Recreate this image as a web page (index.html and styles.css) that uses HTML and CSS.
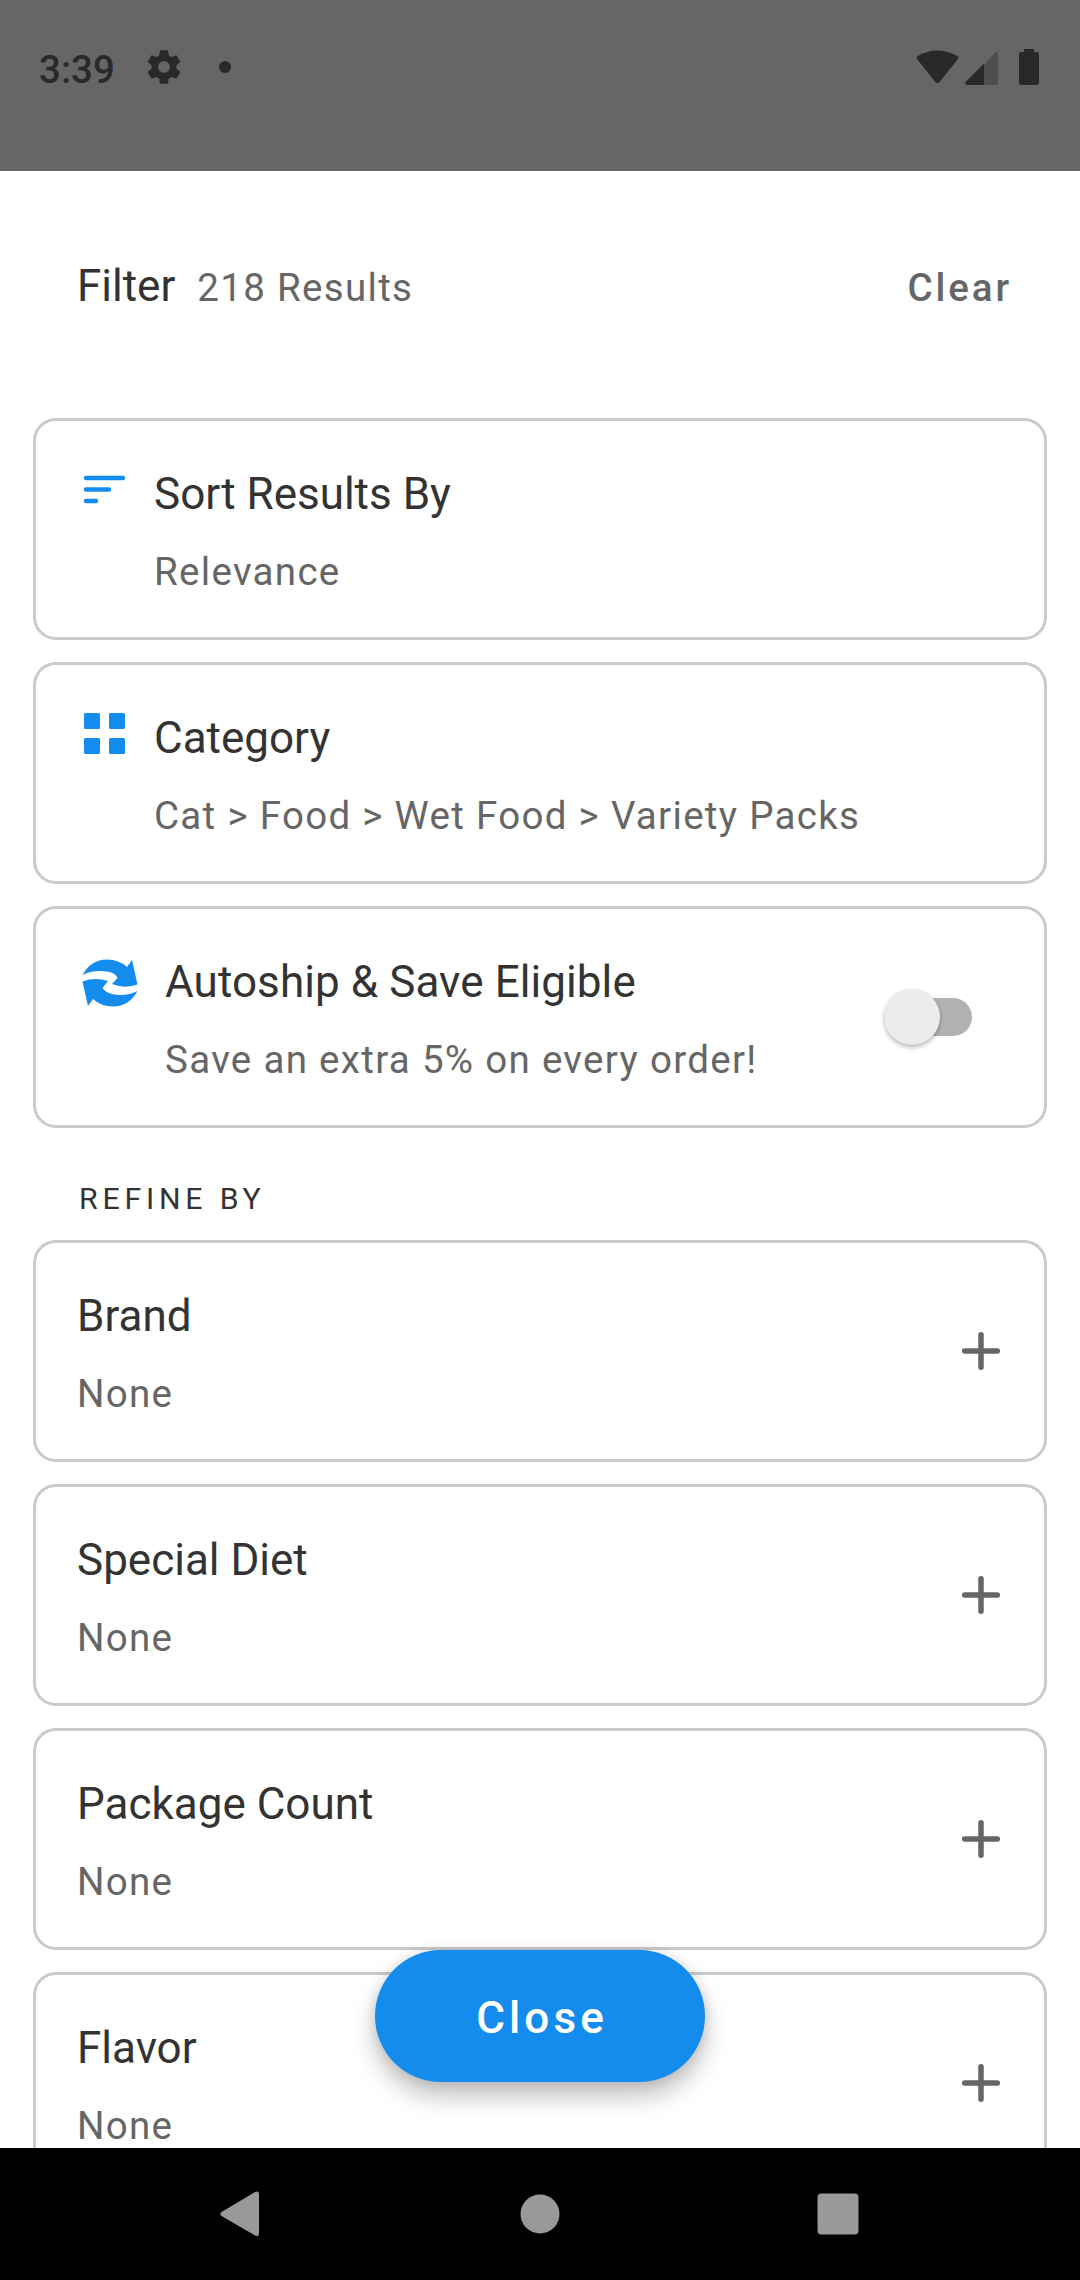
FILE: index.html
```html
<!DOCTYPE html>
<html lang="en">
<head>
<meta charset="utf-8">
<title>Filter</title>
<link rel="stylesheet" href="styles.css">
</head>
<body>
<div class="screen">
  <header class="status">
    <span class="time">3:39</span>
    <svg class="gear" width="40" height="40" viewBox="0 0 24 24"><path d="M19.43 12.98c.04-.32.07-.64.07-.98s-.03-.66-.07-.98l2.11-1.65c.19-.15.24-.42.12-.64l-2-3.46c-.12-.22-.39-.3-.61-.22l-2.49 1c-.52-.4-1.08-.73-1.69-.98l-.38-2.65C14.46 2.18 14.25 2 14 2h-4c-.25 0-.46.18-.49.42l-.38 2.65c-.61.25-1.17.59-1.69.98l-2.49-1c-.23-.09-.49 0-.61.22l-2 3.46c-.13.22-.07.49.12.64l2.11 1.65c-.04.32-.07.65-.07.98s.03.66.07.98l-2.11 1.65c-.19.15-.24.42-.12.64l2 3.46c.12.22.39.3.61.22l2.49-1c.52.4 1.08.73 1.69.98l.38 2.65c.03.24.24.42.49.42h4c.25 0 .46-.18.49-.42l.38-2.65c.61-.25 1.17-.59 1.69-.98l2.49 1c.23.09.49 0 .61-.22l2-3.46c.12-.22.07-.49-.12-.64l-2.11-1.65zM12 15.5c-1.93 0-3.5-1.57-3.5-3.5s1.57-3.5 3.5-3.5 3.5 1.57 3.5 3.5-1.57 3.5-3.5 3.5z"/></svg>
    <span class="dot"></span>
    <svg class="signals" width="124" height="38" viewBox="916 48 124 38">
      <path d="M917.2 59.2Q915.6 57.4 917.6 56Q937 45 957.4 56Q959.4 57.4 957.8 59.2L939.6 82Q937.5 84.3 935.4 82Z"/>
      <path class="faint" d="M984 65L995.2 52.6Q998 50.600 998 54V83Q998 85 996 85H984Z"/>
      <path d="M984 63.500V85H967Q963.600 84.500 966 81.500Z"/>
      <path d="M1024 49H1034V52H1037Q1039 52 1039 54V83Q1039 85 1037 85H1021Q1019 85 1019 83V54Q1019 52 1021 52H1024Z"/>
    </svg>
  </header>
  <main class="sheet">
    <div class="head">
      <span class="title">Filter</span>
      <span class="sub">218 Results</span>
      <span class="clear">Clear</span>
    </div>
    <section class="cards">
      <article class="card">
        <svg class="icon" width="48" height="48" viewBox="80 463 48 48"><path class="lines" d="M86 478H123M86 489.500H109M86 501H96"/></svg>
        <div class="text"><div class="title">Sort Results By</div><div class="sub">Relevance</div></div>
      </article>
      <article class="card">
        <svg class="icon" width="48" height="48" viewBox="80 707 48 48"><rect x="84" y="713" width="16" height="16" rx="1.500"/><rect x="109" y="713" width="16" height="16" rx="1.500"/><rect x="84" y="738" width="16" height="16" rx="1.500"/><rect x="109" y="738" width="16" height="16" rx="1.500"/></svg>
        <div class="text"><div class="title">Category</div><div class="sub">Cat &gt; Food &gt; Wet Food &gt; Variety Packs</div></div>
      </article>
      <article class="card">
        <svg class="icon wide" width="60" height="60" viewBox="80 951 60 60"><path d="M82.500 975Q91 959.500 107 959.500Q119 959.500 127 967L132 960L137.500 984.500Q125 989 112 984L117.500 978Q115 971 100 971Q90 971 82.500 975Z"/><path d="M137.500 991Q129 1006.500 113 1006.500Q101 1006.500 93 999L88 1006L82.500 981.500Q95 977 108 981L102.500 988Q107 995 120 995Q130 995 137.500 991Z"/></svg>
        <div class="text"><div class="title spaced">Autoship &amp; Save Eligible</div><div class="sub">Save an extra 5% on every order!</div></div>
        <div class="switch"><span class="thumb"></span></div>
      </article>
    </section>
    <h2 class="label">REFINE BY</h2>
    <section class="cards">
      <article class="card"><div class="text"><div class="title">Brand</div><div class="sub">None</div></div><svg class="plus" width="40" height="40" viewBox="0 0 40 40"><path d="M20 3.700V36.300M3.700 20H36.300"/></svg></article>
      <article class="card"><div class="text"><div class="title">Special Diet</div><div class="sub">None</div></div><svg class="plus" width="40" height="40" viewBox="0 0 40 40"><path d="M20 3.700V36.300M3.700 20H36.300"/></svg></article>
      <article class="card"><div class="text"><div class="title">Package Count</div><div class="sub">None</div></div><svg class="plus" width="40" height="40" viewBox="0 0 40 40"><path d="M20 3.700V36.300M3.700 20H36.300"/></svg></article>
      <article class="card"><div class="text"><div class="title">Flavor</div><div class="sub">None</div></div><svg class="plus" width="40" height="40" viewBox="0 0 40 40"><path d="M20 3.700V36.300M3.700 20H36.300"/></svg></article>
    </section>
    <button class="close">Close</button>
  </main>
  <nav class="nav">
    <svg width="40" height="46" viewBox="0 0 40 46"><path d="M1.500 21L35.500 .8Q39 -.5 39 3V43Q39 46 35.500 44.700L1.500 25Q-.8 23 1.500 21Z"/></svg>
    <svg width="42" height="40" viewBox="0 0 42 40"><circle cx="22" cy="20" r="19.500"/></svg>
    <svg width="42" height="42" viewBox="0 0 42 42"><rect x=".5" y=".5" width="41" height="41" rx="4"/></svg>
  </nav>
</div>
</body>
</html>
```
FILE: styles.css
```css
* { box-sizing: border-box; }
body { margin: 0; background: #fff; font-family: Roboto, sans-serif; }
.screen { width: 1080px; height: 2280px; display: flex; flex-direction: column; overflow: hidden; }

.status { height: 171px; flex: none; background: #666; display: flex; align-items: flex-start; padding: 47px 40px 0 39px; }
.status svg { fill: #292929; }
.time { font-size: 38.5px; font-weight: 500; line-height: 46px; color: #292929; width: 105px; }
.dot { width: 12px; height: 12px; border-radius: 50%; background: #292929; margin: 14px 0 0 35px; }
.signals { margin: 1px 0 0 auto; }
.signals .faint { fill: #4e4e4e; }

.sheet { flex: 1; min-height: 0; position: relative; overflow: hidden; padding: 0 33px; }
.head { height: 247px; padding: 89px 35px 0 44px; display: flex; align-items: baseline; }
.head .sub { margin-left: 22px; }
.title { font-size: 44px; line-height: 52px; color: #333; white-space: nowrap; }
.title.spaced { letter-spacing: .08px; }
.sub { font-size: 38.5px; line-height: 46px; letter-spacing: 1.31px; color: #666; white-space: nowrap; }
.clear { margin-left: auto; font-size: 38.5px; font-weight: 500; letter-spacing: 2.9px; color: #666; }

.cards { display: flex; flex-direction: column; gap: 22px; }
.card { height: 222px; border: 3px solid #cacaca; border-radius: 23px; display: flex; align-items: flex-start; padding: 0 41px; }
.card .text { padding-top: 47px; flex: 1; }
.card .sub { margin-top: 29px; }
.icon { fill: #148cee; margin: 42px 26px 0 3px; flex: none; }
.icon.wide { margin-right: 25px; }
.lines { stroke: #148cee; stroke-width: 4.4; stroke-linecap: round; }

.switch { width: 88px; height: 38px; align-self: center; margin-right: 31px; background: linear-gradient(90deg, transparent 20px, #b2b2b2 20px); border-radius: 19px; display: flex; align-items: center; }
.thumb { width: 56px; height: 56px; flex: none; border-radius: 50%; background: #ececec; box-shadow: 0 3px 4px rgba(0,0,0,.22), 0 0 3px rgba(0,0,0,.1); }
.plus { align-self: center; stroke: #666; stroke-width: 5.500; stroke-linecap: round; fill: none; margin-right: 2px; }

.label { margin: 0; height: 112px; padding: 53px 0 0 46px; font-size: 30.25px; line-height: 36px; font-weight: 400; letter-spacing: 4.8px; color: #333; }

.close { position: absolute; left: 375px; top: 1779px; width: 330px; height: 132px; border: 0; border-radius: 66px; background: #148cee; color: #fff; font: 500 44px/132px Roboto, sans-serif; letter-spacing: 4.1px; padding: 2px 0 0 4px; box-shadow: 0 14px 24px rgba(0,0,0,.25), 0 0 12px rgba(0,0,0,.1); }

.nav { height: 132px; flex: none; background: #000; display: flex; align-items: center; justify-content: space-between; padding: 0 221px 0 220px; }
.nav svg { fill: #999; }
```
